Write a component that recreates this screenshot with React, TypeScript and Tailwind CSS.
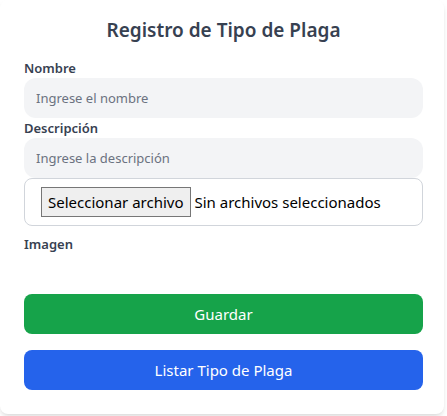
import React from "react";

export default function App() {
  return (
    <div className="min-h-[416px] w-full bg-white" style={{ fontFamily: '"Noto Sans", "Open Sans", sans-serif' }}>
      <div className="w-[444px] rounded-lg bg-white pl-6 pr-[21px] pt-4 pb-6 shadow-[0_4px_6px_-1px_rgba(0,0,0,0.1),0_2px_4px_-2px_rgba(0,0,0,0.1)]">
        <h2 className="mb-[14px] text-center text-[19px] leading-7 font-semibold text-[#374151]">
          Registro de Tipo de Plaga
        </h2>
        <div className="flex flex-col">
          <label className="text-[13px] leading-5 font-semibold text-[#374151]">Nombre</label>
          <input
            type="text"
            placeholder="Ingrese el nombre"
            className="h-10 w-full rounded-xl bg-[#f3f4f6] px-3 text-[13px] text-[#374151] placeholder:text-[#6b7280] outline-none"
          />
          <label className="text-[13px] leading-5 font-semibold text-[#374151]">Descripción</label>
          <input
            type="text"
            placeholder="Ingrese la descripción"
            className="h-10 w-full rounded-xl bg-[#f3f4f6] px-3 text-[13px] text-[#374151] placeholder:text-[#6b7280] outline-none"
          />
          <div className="flex h-12 items-center rounded-lg border border-[#d1d5db] px-4">
            <span className="flex h-[30px] items-center border border-[#767676] bg-[#efefef] px-[6px] text-[15px] text-black">
              Seleccionar archivo
            </span>
            <span className="ml-1 text-[15px] text-black">Sin archivos seleccionados</span>
          </div>
          <label className="mt-2 text-[13px] leading-5 font-semibold text-[#374151]">Imagen</label>
          <div className="h-10" />
          <button className="h-10 w-full rounded-lg bg-[#16a34a] text-[15px] text-white">Guardar</button>
          <button className="mt-4 h-10 w-full rounded-lg bg-[#2563eb] text-[15px] text-white">Listar Tipo de Plaga</button>
        </div>
      </div>
    </div>
  );
}
